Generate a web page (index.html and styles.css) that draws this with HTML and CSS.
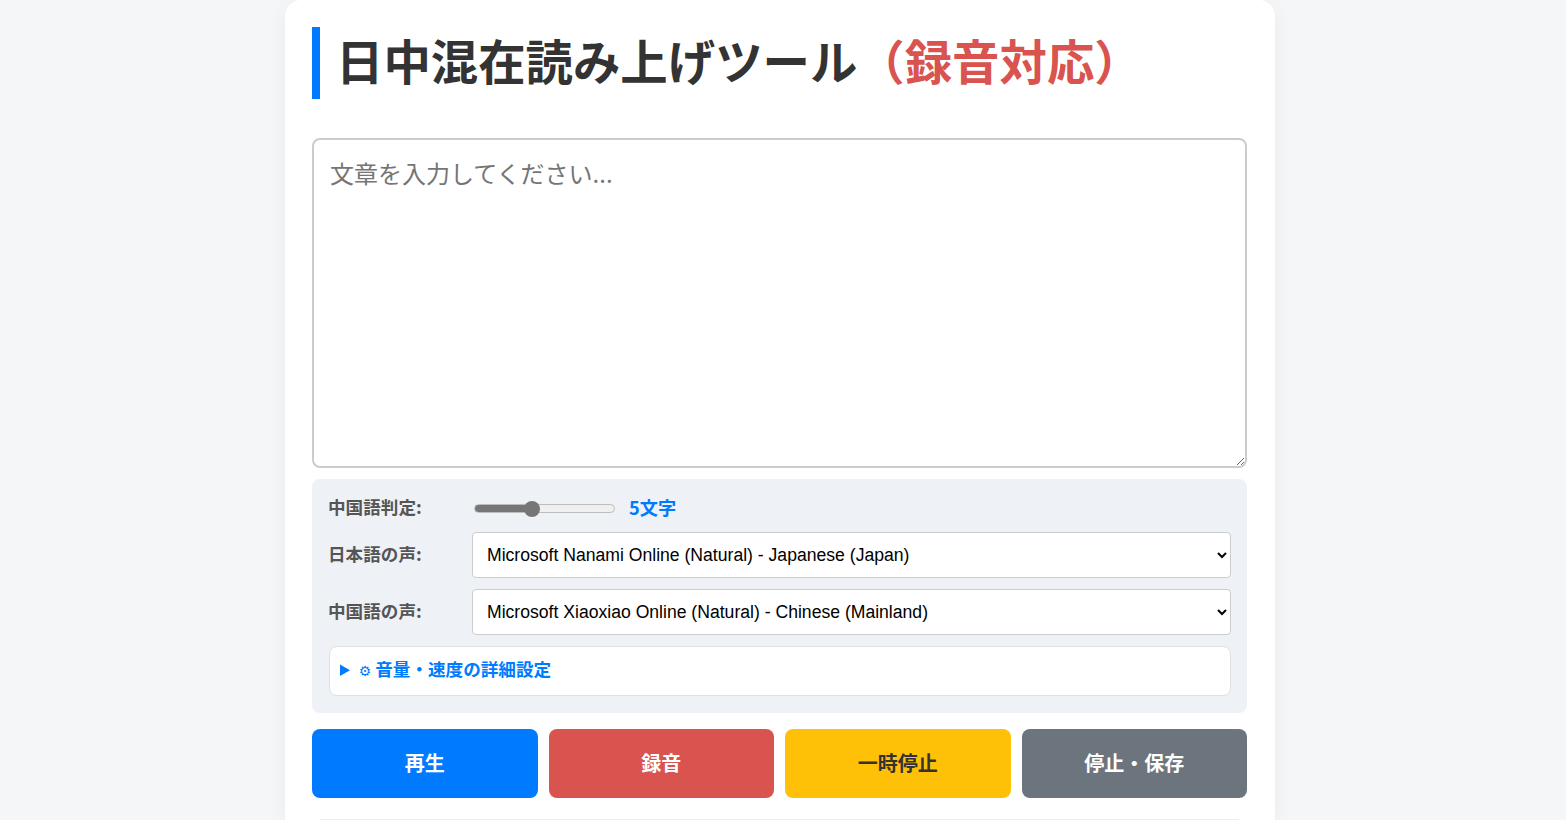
FILE: index.html
```html
<!DOCTYPE html>
<html lang="ja">
<head>
<meta charset="utf-8">
<title>日中混在読み上げツール</title>
<link rel="stylesheet" href="styles.css">
</head>
<body>
<main class="card">
  <h1 class="title">日中混在読み上げツール<span class="title-accent">（録音対応）</span></h1>
  <textarea class="editor" placeholder="文章を入力してください..."></textarea>
  <section class="panel">
    <div class="row row-slider">
      <label class="label">中国語判定:</label>
      <input class="slider" type="range" min="1" max="11" value="5">
      <span class="slider-value">5文字</span>
    </div>
    <div class="row">
      <label class="label">日本語の声:</label>
      <select class="voice"><option>Microsoft Nanami Online (Natural) - Japanese (Japan)</option></select>
    </div>
    <div class="row">
      <label class="label">中国語の声:</label>
      <select class="voice"><option>Microsoft Xiaoxiao Online (Natural) - Chinese (Mainland)</option></select>
    </div>
    <details class="advanced">
      <summary class="advanced-summary"><span class="gear">⚙</span> 音量・速度の詳細設定</summary>
    </details>
  </section>
  <div class="actions">
    <button class="btn btn-play">再生</button>
    <button class="btn btn-rec">録音</button>
    <button class="btn btn-pause">一時停止</button>
    <button class="btn btn-stop">停止・保存</button>
  </div>
  <hr class="divider">
</main>
</body>
</html>
```
FILE: styles.css
```css
* { box-sizing: border-box; }
html, body { margin: 0; height: 820px; overflow: hidden; }
body {
  background: #f4f6f8;
  padding-right: 6px;
  font-family: "Noto Sans CJK JP", "Liberation Sans", sans-serif;
  color: #333;
}
.card {
  width: 990px;
  height: 820px;
  overflow: hidden;
  margin: 0 auto;
  padding: 27px 28px 0 27px;
  background: #fff;
  border-radius: 16px 16px 0 0;
  box-shadow: 0 4px 20px rgba(0, 0, 0, 0.05);
}
.title {
  margin: 0 0 39px;
  height: 72px;
  display: flex;
  align-items: center;
  border-left: 8px solid #007bff;
  padding: 0 0 6px 16px;
  font-size: 47.4px;
  font-weight: 700;
  line-height: 66px;
  color: #333;
  white-space: nowrap;
}
.title-accent { color: #d9534f; }
.editor {
  display: block;
  width: 100%;
  height: 330px;
  padding: 15px 16px 16px;
  margin: 0 0 11px;
  border: 2px solid #ccc;
  border-radius: 8px;
  background: #fff;
  font-family: "Noto Sans CJK JP", sans-serif;
  font-size: 24px;
  line-height: 1.5;
  outline: none;
}
.editor::placeholder { color: #757575; opacity: 1; }
.panel {
  background: #eef1f6;
  border-radius: 8px;
  padding: 17px 16px 17px 17px;
  margin-bottom: 16px;
  display: flex;
  flex-direction: column;
  gap: 11px;
}
.row { display: flex; align-items: center; }
.row-slider { height: 25px; }
.label {
  width: 144px;
  margin-left: -1px;
  flex: none;
  padding-bottom: 4px;
  font-size: 17.6px;
  font-weight: 700;
  color: #555;
}
.slider {
  -webkit-appearance: none;
  appearance: none;
  width: 141px;
  height: 9px;
  margin: 0 14px 0 2px;
  border: 1px solid #bdbdbd;
  border-radius: 5px;
  background: linear-gradient(to right, #767676 0 41%, #efefef 41% 100%);
}
.slider::-webkit-slider-thumb {
  -webkit-appearance: none;
  appearance: none;
  width: 16px;
  height: 16px;
  border-radius: 50%;
  background: #767676;
  border: none;
}
.slider-value {
  padding-bottom: 4px;
  font-size: 18.2px;
  font-weight: 700;
  color: #007bff;
}
.voice {
  flex: 1;
  min-width: 0;
  height: 46px;
  padding: 0 10px;
  border: 1px solid #ccc;
  border-radius: 4px;
  background-color: #fff;
  color: #000;
  font-family: "Liberation Sans", Arial, sans-serif;
  font-size: 17.6px;
}
.advanced {
  height: 50px;
  background: #fff;
  border: 1px solid #e0e0e0;
  border-radius: 8px;
  padding: 0 10px;
}
.advanced-summary {
  line-height: 44px;
  font-size: 17.6px;
  font-weight: 700;
  color: #007bff;
  cursor: pointer;
}
.gear { font-size: 14px; font-family: "DejaVu Sans", sans-serif; font-weight: 400; }
.actions {
  display: grid;
  grid-template-columns: repeat(4, 1fr);
  gap: 11px;
}
.btn {
  height: 69px;
  padding: 0 0 2px;
  border: none;
  border-radius: 8px;
  font-family: "Noto Sans CJK JP", sans-serif;
  font-size: 20px;
  font-weight: 700;
  color: #fff;
  cursor: pointer;
}
.btn-play { background: #007bff; }
.btn-rec { background: #d9534f; }
.btn-pause { background: #ffc107; color: #333; }
.btn-stop { background: #6c757d; }
.divider {
  margin: 21px 8px 0;
  border: none;
  border-top: 1px solid #eee;
}
```
